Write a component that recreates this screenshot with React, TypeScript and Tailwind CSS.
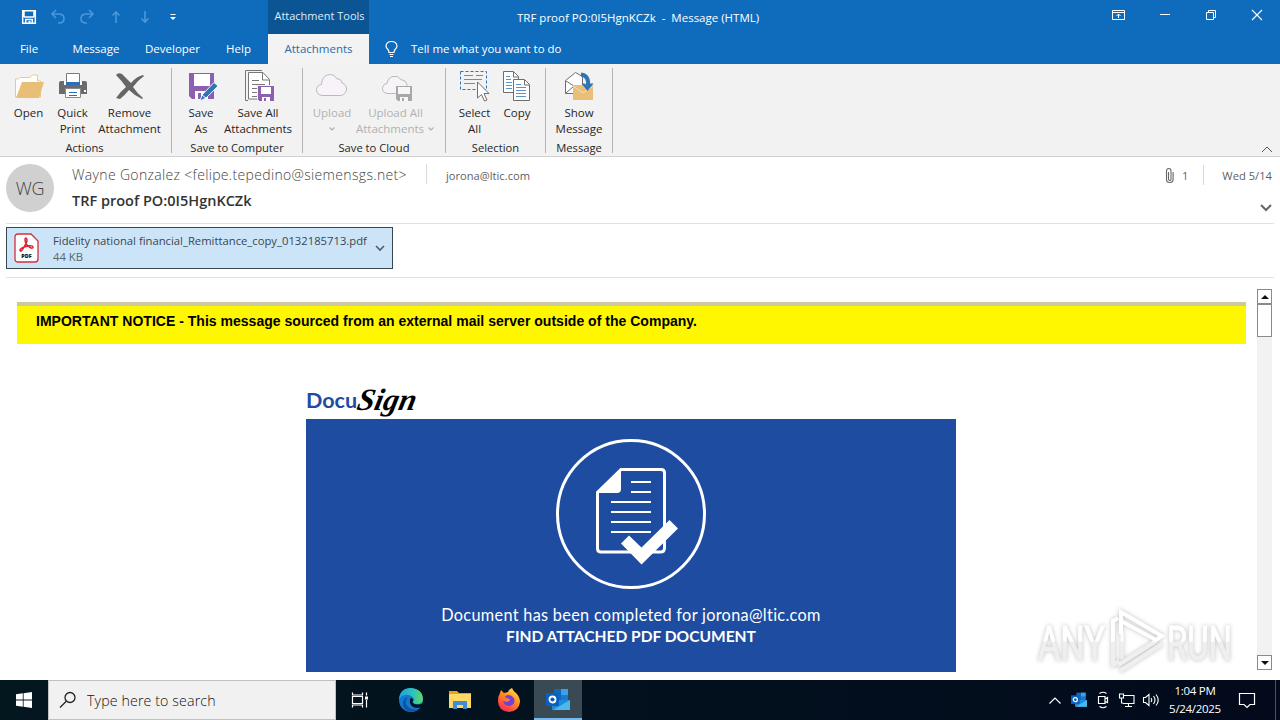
import type { ReactNode } from 'react';
import clsx from 'clsx';

interface RibbonButtonProps {
  icon: ReactNode;
  lines: ReactNode[];
  className: string;
  disabled?: boolean;
}

const RibbonButton = ({ icon, lines, className, disabled }: RibbonButtonProps) => (
  <button className={clsx('flex shrink-0 flex-col items-center whitespace-nowrap', disabled ? 'text-[#b1b1b1]' : 'text-[#262626]', className)}>
    <span className="flex h-[37px] items-center justify-center pb-[1px]">{icon}</span>
    {lines.map((line, i) => (
      <span key={i} className="flex h-4 items-center leading-4">{line}</span>
    ))}
  </button>
);

const RibbonGroup = ({ label, className, children }: { label: string; className: string; children: ReactNode }) => (
  <div className={clsx('flex h-[85px] shrink-0 flex-col border-r border-[#b5b5b5]', className)}>
    <div className="flex h-[71px] shrink-0 items-start">{children}</div>
    <div className="text-center text-[11.2px] leading-[17px] text-[#262626]">{label}</div>
  </div>
);

const Chevron = ({ className }: { className?: string }) => (
  <svg className={className} width="8" height="6" viewBox="0 0 8 6" fill="none" stroke="currentColor" strokeWidth="1.2">
    <path d="M1.500 1.500 4 4l2.500-2.500" />
  </svg>
);

/* ---- ribbon icons ---- */

const FolderIcon = () => (
  <svg className="ml-[2px]" width="32" height="32" viewBox="0 0 32 32">
    <path d="M1.500 27V9h3l2-1.500h9l3-2.500h5v6h3v16z" fill="#fff" stroke="#edc88c" />
    <path d="M2 28 8 12h22l-5 16z" fill="#e9bf78" />
  </svg>
);

const PrinterIcon = () => (
  <svg width="32" height="32" viewBox="0 0 32 32">
    <path d="M2 13q0-2 2-2h24q2 0 2 2v11H2z" fill="#6b6b6b" />
    <path d="M9.500 14V3.500h13V14" fill="#fff" stroke="#7a7a7a" />
    <path d="M7 11h2v4H7zM23 11h2v4h-2z" fill="#fff" />
    <path d="M9 12h14v3H9z" fill="#2b70b8" />
    <path d="M8.500 18.500h15v9h-15z" fill="#fff" stroke="#8a8a8a" />
    <path d="M12 22.500h8M12 25.500h8" stroke="#2b70b8" />
    <path d="M27 20h2v2h-2z" fill="#fff" />
  </svg>
);

const RemoveIcon = () => (
  <svg width="32" height="32" viewBox="0 0 32 32" fill="#666">
    <path d="M2 5q2-3 6-1 5 5 9 9 6-7 12-8l1 1q-7 5-11 11 4 6 10 11l-1 1q-7-3-13-9-4 5-9 9l-4-1q4-6 10-11Q7 10 2 5z" />
  </svg>
);

const SaveAsIcon = () => (
  <svg className="ml-[1px]" width="32" height="32" viewBox="0 0 32 32">
    <path d="M3 3h25v26H6l-3-3z" fill="#8d5fb0" />
    <path d="M8 4h16v12H8z" fill="#fff" />
    <path d="M9 21h13v8H9z" fill="#fff" />
    <path d="M12 23h3v6h-3z" fill="#8d5fb0" />
    <path d="M28 12.500 32 16 20 28l-6 3 2-6z" fill="#2e75b6" stroke="#f2f2f2" />
    <path d="m16 25 4 3" stroke="#fff" />
  </svg>
);

const SaveAllIcon = () => (
  <svg className="ml-[1px]" width="32" height="34" viewBox="0 0 32 34" fill="none" stroke="#777">
    <path d="M5 31.500H2.500v-30H19" />
    <path d="M5.500 3.500H20l6.500 7V30h-21z" fill="#fff" />
    <path d="M19.500 4v7H26M9 11.500h7M9 15.500h13M9 19.500h7M9 23.500h6M9 27.500h6" />
    <path d="M14.500 16.500h17v16h-15l-2-2z" fill="#8d5fb0" stroke="#f2f2f2" />
    <path d="M18 18h10v7H18zM19 28h8v4h-8z" fill="#fff" stroke="none" />
    <path d="M21 29h2v3h-2z" fill="#8d5fb0" stroke="none" />
  </svg>
);

const CloudIcon = () => (
  <svg className="-ml-[1px]" width="33" height="32" viewBox="0 0 33 32" fill="#f7f3f8" stroke="#bcb8bf">
    <path d="M7 25.500q-5.500-1-5.500-6 .2-4 5-5 .5-8 6-9.500 6-2 9.500 4 4-.5 5 4 4.500 1.500 4.500 6t-5 6.500z" />
  </svg>
);

const CloudSaveIcon = () => (
  <svg className="ml-[3px]" width="33" height="32" viewBox="0 0 33 32">
    <path d="M6 23.500q-4.500-1-4.500-5t4.500-5q1-6 6-7 5-1.500 8 3 5 .5 6 5v9z" fill="#f7f3f8" stroke="#bcb8bf" />
    <path d="M15 16h16v15H17l-2-2z" fill="#a8a8a8" />
    <path d="M17 17h12v7H17zM19 27h8v4h-8z" fill="#f7f7f7" />
    <path d="M21 28h2v3h-2z" fill="#a8a8a8" />
  </svg>
);

const SelectAllIcon = () => (
  <svg width="32" height="34" viewBox="0 0 32 34" fill="none" stroke="#2e75b6">
    <path d="M1.500 2.500h26v18h-26z" strokeDasharray="3 2" />
    <path d="M5 6.500h9M17 6.500h7M5 10.500h18M5 14.500h11" stroke="#5c92c4" />
    <path d="M18.500 13v16l4-3.500 3 6.500 2.500-1-3-6.500h5z" fill="#fff" stroke="#6e6e6e" />
  </svg>
);

const CopyIcon = () => (
  <svg width="30" height="34" viewBox="0 0 30 34" fill="#fff" stroke="#6e6e6e">
    <path d="M1.500 2.500h10l5 5v16h-15z" />
    <path d="M11.500 3v5H16" />
    <path d="M4 7.500h4M4 10.500h5M4 13.500h6M4 16.500h6M4 19.500h6" stroke="#5c92c4" />
    <path d="M11.500 10.500h11l5 5v16h-16z" />
    <path d="M22.500 11v5H27" />
    <path d="M14 15.500h5M14 18.500h10M14 21.500h10M14 24.500h10M14 27.500h10" stroke="#5c92c4" />
  </svg>
);

const ShowMessageIcon = () => (
  <svg width="32" height="34" viewBox="0 0 32 34">
    <path d="M2.500 24.500v-13l10-8 7 4v17z" fill="#fff" stroke="#6e6e6e" />
    <path d="m3 12 8 5-8 7" fill="none" stroke="#6e6e6e" />
    <path d="M10 16h20v15H10z" fill="#e9bf78" />
    <path d="m10 17 10 7 10-7" fill="none" stroke="#f7e2bd" />
    <path d="M18 5.500q8 1 7 11" fill="none" stroke="#2e75b6" strokeWidth="4" />
    <path d="M18.500 14.500 24.500 22l6-7.500-3 0-3 2-3-2z" fill="#2e75b6" />
  </svg>
);

/* ---- title bar ---- */

const QuickAccess = () => (
  <div className="flex w-[268px] items-center pl-[21px] text-[#4b97da]">
    <svg width="16" height="16" viewBox="0 0 16 16" fill="none" stroke="#fff" strokeWidth="1.500">
      <path d="M1.700 1.700h12.600v12.600H1.700zM3 8h10M3 2v6M13 2v6" />
      <path d="M4.700 14v-3.500h6.600V14" />
      <path d="M7.500 12h2v2.500h-2z" fill="#fff" stroke="none" />
    </svg>
    <svg className="ml-[13px]" width="16" height="16" viewBox="0 0 16 16" fill="none" stroke="currentColor" strokeWidth="1.600">
      <path d="M6 1 2 5l4 4M2 5h7.500q4.500.5 4.500 4.500T10 14H8" />
    </svg>
    <svg className="ml-[13px]" width="16" height="16" viewBox="0 0 16 16" fill="none" stroke="currentColor" strokeWidth="1.600">
      <path d="m10 1 4 4-4 4M14 5H6.500Q2 5.500 2 9.500T6 14h2" />
    </svg>
    <svg className="ml-[13px]" width="16" height="16" viewBox="0 0 16 16" fill="none" stroke="currentColor" strokeWidth="1.600">
      <path d="M8 14V3M4.500 6.500 8 3l3.500 3.500" />
    </svg>
    <svg className="ml-[13px]" width="16" height="16" viewBox="0 0 16 16" fill="none" stroke="currentColor" strokeWidth="1.600">
      <path d="M8 2v11M4.500 9.500 8 13l3.500-3.500" />
    </svg>
    <svg className="ml-[16px]" width="8" height="8" viewBox="0 0 8 8" fill="#fff">
      <path d="M1.500 1h5v1h-5zM1 4h6L4 7z" />
    </svg>
  </div>
);

const WindowButtons = () => (
  <div className="ml-auto flex shrink-0 items-center pr-[17px] pb-[4px]">
    <svg width="15" height="12" viewBox="0 0 15 12" fill="none" stroke="#fff">
      <path d="M1.500 1.500h12v9h-12zM1.500 3.500h12M7.500 9V5M5.500 7l2-2 2 2" />
    </svg>
    <svg className="ml-[33px]" width="12" height="12" viewBox="0 0 12 12" stroke="#fff"><path d="M1 5.500h10" /></svg>
    <svg className="ml-[34px]" width="12" height="12" viewBox="0 0 12 12" fill="none" stroke="#fff">
      <path d="M1.500 3.500h7v7h-7zM3.500 3V1.500h7v7H9" />
    </svg>
    <svg className="ml-[34px]" width="12" height="12" viewBox="0 0 12 12" stroke="#fff" strokeWidth="1.100"><path d="m1 1 10 10M11 1 1 11" /></svg>
  </div>
);

const TitleBar = () => (
  <header className="bg-[#0f6cbd] text-[11.500px] text-white">
    <div className="flex h-[34px]">
      <QuickAccess />
      <div className="flex w-[101px] justify-center bg-[#0c5594] pt-[8px] pl-[2px] text-[11px] leading-4 whitespace-nowrap text-[#dcecf8]">Attachment Tools</div>
      <div className="ml-[148px] pt-[10px] leading-4 whitespace-pre">TRF proof PO:0I5HgnKCZk  -  Message (HTML)</div>
      <WindowButtons />
    </div>
    <nav className="flex h-[30px] items-center whitespace-nowrap">
      <span className="w-[58px] text-center">File</span>
      <span className="w-[76px] text-center">Message</span>
      <span className="w-[77px] text-center">Developer</span>
      <span className="w-[57px] pr-[2px] text-center">Help</span>
      <span className="flex h-full w-[101px] items-center justify-center bg-[#f3f3f3] text-[#2b6cad]">Attachments</span>
      <svg className="ml-[15px]" width="15" height="18" viewBox="0 0 15 18" fill="none" stroke="#fff" strokeWidth="1.200">
        <path d="M5 12.500q0-2-1.500-3.500Q2 7.500 2 6q.5-4.500 5.500-4.500T13 6q0 1.500-1.500 3T10 12.500zM5.500 14.500h4M6 16.500h3" />
      </svg>
      <span className="ml-[12px] text-[11.450px]">Tell me what you want to do</span>
    </nav>
  </header>
);

const Ribbon = () => (
  <section className="flex h-[93px] border-b border-[#d0d0d0] bg-[#f2f2f2] pt-[4px] text-[11.500px]">
    <RibbonGroup label="Actions" className="w-[172px] pr-[2px]">
      <RibbonButton className="ml-[6px] w-[45px]" icon={<FolderIcon />} lines={['Open']} />
      <RibbonButton className="w-[43px]" icon={<PrinterIcon />} lines={['Quick', 'Print']} />
      <RibbonButton className="w-[71px]" icon={<RemoveIcon />} lines={['Remove', 'Attachment']} />
    </RibbonGroup>
    <RibbonGroup label="Save to Computer" className="w-[131px]">
      <RibbonButton className="ml-[8px] w-[42px]" icon={<SaveAsIcon />} lines={['Save', 'As']} />
      <RibbonButton className="w-[72px]" icon={<SaveAllIcon />} lines={['Save All', 'Attachments']} />
    </RibbonGroup>
    <RibbonGroup label="Save to Cloud" className="w-[143px]">
      <RibbonButton disabled className="ml-[6px] w-[46px]" icon={<CloudIcon />} lines={['Upload', <Chevron />]} />
      <RibbonButton
        disabled
        className="w-[81px]"
        icon={<CloudSaveIcon />}
        lines={['Upload All', <>Attachments<Chevron className="ml-[3px]" /></>]}
      />
    </RibbonGroup>
    <RibbonGroup label="Selection" className="w-[100px]">
      <RibbonButton className="ml-[8px] w-[41px]" icon={<SelectAllIcon />} lines={['Select', 'All']} />
      <RibbonButton className="w-[44px]" icon={<CopyIcon />} lines={['Copy']} />
    </RibbonGroup>
    <RibbonGroup label="Message" className="w-[67px]">
      <RibbonButton className="w-[66px]" icon={<ShowMessageIcon />} lines={['Show', 'Message']} />
    </RibbonGroup>
    <svg className="mt-auto mr-[6px] mb-[2px] ml-auto" width="14" height="9" viewBox="0 0 14 9" fill="none" stroke="#555">
      <path d="m2 7 5-5 5 5" />
    </svg>
  </section>
);

/* ---- message header ---- */

const MessageHeader = () => (
  <section className="mx-[6px] flex h-[67px] border-b border-[#e1e1e1] text-[#5f5f5f]">
    <div className="mt-[7px] flex h-[48px] w-[48px] items-center justify-center rounded-full bg-[#d0d0d0] text-[18px] text-[#444]">
      <span className="font-light tracking-[-0.3px]">WG</span>
    </div>
    <div className="ml-[18px] w-[354px] pt-[8px] whitespace-nowrap">
      <div className="text-[14px] leading-5 font-light tracking-[0.33px] text-[#444]">Wayne Gonzalez &lt;felipe.tepedino@siemensgs.net&gt;</div>
      <div className="mt-[6px] text-[14.500px] leading-5 font-semibold text-[#333]">TRF proof PO:0I5HgnKCZk</div>
    </div>
    <div className="mt-[7px] h-[20px] border-l border-[#dadada] pl-[19px] text-[11.150px] leading-[24px]">jorona@ltic.com</div>
    <div className="ml-auto flex flex-col items-end">
      <div className="mt-[7px] flex h-[22px] items-center pr-[2px] text-[11.200px]">
        <svg width="10" height="17" viewBox="0 0 10 17" fill="none" stroke="#666" strokeWidth="1.100">
          <path d="M3.500 5v7q0 1.500 1.300 1.500T6 12V4Q6 1.500 3.800 1.500T1.500 4v8.500q0 3 3.300 3t3.300-3V5" />
        </svg>
        <span className="ml-[7px] pt-[2px]">1</span>
        <span className="ml-[15px] h-[20px] border-l border-[#dadada]" />
        <span className="ml-[18px] pt-[2px] whitespace-nowrap">Wed 5/14</span>
      </div>
      <svg className="mt-[17px] mr-[1px]" width="14" height="10" viewBox="0 0 14 10" fill="none" stroke="#666" strokeWidth="2">
        <path d="m2 2 5 5 5-5" />
      </svg>
    </div>
  </section>
);

const AttachmentBar = () => (
  <section className="mx-[6px] h-[54px] border-b border-[#e1e1e1] pt-[3px]">
    <div className="flex h-[42px] w-[387px] items-center border border-[#3a4650] bg-[#cce4f7] text-[#3a4650]">
      <svg className="ml-[7px] shrink-0" width="25" height="30" viewBox="0 0 25 30" fill="none">
        <path d="M4 1h13l7 7v18q0 3-3 3H4q-3 0-3-3V4q0-3 3-3z" fill="#fff" stroke="#d32f3a" strokeWidth="1.300" />
        <path d="M6 17q0-2 6-3.500 7-1.500 7 .5 0 2-3 .5-5-3-5-8 .3-2.500 1.500-1 1.500 2-1.500 7Q8 17.500 7 18q-1 .3-1-1z" stroke="#e02030" strokeWidth="1.500" />
        <text x="12.500" y="25" textAnchor="middle" fontSize="5.500" fontWeight="800" fill="#111">PDF</text>
      </svg>
      <div className="ml-[14px] w-[315px] pt-[2px] text-[11.270px] leading-4 whitespace-nowrap">
        <div>Fidelity national financial_Remittance_copy_0132185713.pdf</div>
        <div className="text-[#56646f]">44 KB</div>
      </div>
      <svg className="ml-[6px] shrink-0" width="12" height="9" viewBox="0 0 12 9" fill="none" stroke="#4d5f6d" strokeWidth="1.600">
        <path d="m2 2 4 4 4-4" />
      </svg>
    </div>
  </section>
);

/* ---- message body ---- */

const DocuSignCard = () => (
  <div className="mt-[36px] ml-[289px] w-[650px]">
    <div className="flex h-[39px] items-end whitespace-nowrap">
      <span className="w-[52px] font-['Lato',sans-serif] text-[21.500px] leading-[38px] font-bold text-[#1f4ba0]">Docu</span>
      <span className="-skew-x-12 font-['Liberation_Serif',serif] text-[31px] leading-[38px] font-bold text-black italic">Sign</span>
    </div>
    <div className="flex h-[253px] flex-col items-center bg-[#1e4ca1] pt-[20px] font-['Lato',sans-serif] text-white">
      <svg width="150" height="150" viewBox="0 0 150 150" fill="none" stroke="#fff">
        <circle cx="75" cy="75" r="73.500" strokeWidth="3" />
        <path d="M65 30.500h40q3.500 0 3.500 3.500v75q0 4-4 4H45q-3.500 0-3.500-3.500V53.500z" strokeWidth="3" />
        <path d="M41 54v-1l23-23h1v20q0 4-4 4z" fill="#fff" stroke="none" />
        <path d="M75 43h20M75 53h20M55 63h40M55 73h40M55 83h40M55 93h40" strokeWidth="2" />
        <path d="m65 104.500 8-8 12.500 12L113.500 81l8.500 8.500-36.500 36z" fill="#fff" stroke="none" />
      </svg>
      <div className="mt-[15px] text-[16.300px] leading-[22px] tracking-[0.3px]">Document has been completed for jorona@ltic.com</div>
      <div className="-mt-[1px] text-[15.550px] leading-[22px] font-bold">FIND ATTACHED PDF DOCUMENT</div>
    </div>
  </div>
);

const Scrollbar = () => (
  <div className="flex h-[381px] w-[15px] flex-col bg-[#f2f2f2]">
    <div className="flex h-[15px] items-center justify-center border border-[#8a8a8a] bg-white">
      <svg width="8" height="4" viewBox="0 0 8 4"><path d="m0 4 4-4 4 4z" fill="#111" /></svg>
    </div>
    <div className="h-[33px] border border-[#8a8a8a] bg-white" />
    <div className="mt-auto flex h-[15px] items-center justify-center border border-[#8a8a8a] bg-white">
      <svg width="8" height="4" viewBox="0 0 8 4"><path d="m0 0 4 4 4-4z" fill="#111" /></svg>
    </div>
  </div>
);

const Watermark = () => (
  <svg
    className="absolute top-[604px] left-[1030px] font-['Roboto',sans-serif] drop-shadow-[0_0_2px_rgba(0,0,0,0.25)]"
    width="214"
    height="76"
    viewBox="0 0 214 76"
  >
    <defs>
      <linearGradient id="mark" gradientUnits="userSpaceOnUse" x1="0" y1="0" x2="0" y2="76">
        <stop offset="0.49" stopColor="#fff" />
        <stop offset="0.5" stopColor="#efefef" />
      </linearGradient>
      <linearGradient id="mark-text" gradientUnits="userSpaceOnUse" x1="0" y1="-56" x2="0" y2="20">
        <stop offset="0.49" stopColor="#fff" />
        <stop offset="0.5" stopColor="#efefef" />
      </linearGradient>
    </defs>
    <g fill="url(#mark-text)" stroke="url(#mark-text)" fontSize="49">
      <text transform="translate(8 56) scale(0.7 1)">ANY</text>
      <text transform="translate(137 56) scale(0.67 1)">RUN</text>
    </g>
    <path
      d="M88 14l-5 3v44l6-4M91 30V8l41 24-6 4-35-19M90 67l42-27M88 61l38-24"
      fill="none"
      stroke="url(#mark)"
      strokeWidth="4"
    />
    <path d="M92 27v28" fill="none" stroke="url(#mark)" strokeWidth="3" />
  </svg>
);

const MessageBody = () => (
  <main className="flex h-[402px] bg-white pt-[11px] pl-[17px]">
    <div className="w-[1229px] pt-[13px]">
      <div className="h-[42px] border-t-[4px] border-[#ccc8a0] bg-[#fff700] pt-[7px] pl-[19px] font-['Liberation_Sans',Arial,sans-serif] text-[14px] leading-4 font-bold tracking-[0.02px] whitespace-nowrap text-black">
        IMPORTANT NOTICE - This message sourced from an external mail server outside of the Company.
      </div>
      <DocuSignCard />
    </div>
    <div className="ml-[11px]">
      <Scrollbar />
    </div>
  </main>
);

/* ---- taskbar ---- */

const OutlookIcon = ({ className }: { className: string }) => (
  <svg className={className} viewBox="0 0 24 24">
    <path d="M8 1h14v12H8z" fill="#1067b8" />
    <path d="M15 1h7v6h-7z" fill="#35a1ef" />
    <path d="M15 7h7v6h-7z" fill="#1b78d0" />
    <path d="M6 12h18v10H6z" fill="#1f8ad8" />
    <path d="m24 12-17 10h17z" fill="#4cb8ec" />
    <path d="M0 5h13v13H0z" fill="#0a5fc0" />
    <circle cx="6.500" cy="11.500" r="3" fill="none" stroke="#fff" strokeWidth="1.800" />
  </svg>
);

const EdgeIcon = () => (
  <svg width="24" height="24" viewBox="0 0 24 24">
    <defs>
      <linearGradient id="edge-top" x1="0" y1="0.500" x2="1" y2="0.500">
        <stop offset="0" stopColor="#1ea0e0" />
        <stop offset="0.600" stopColor="#2fc3b8" />
        <stop offset="1" stopColor="#62d860" />
      </linearGradient>
    </defs>
    <circle cx="12" cy="12" r="12" fill="#1379cf" />
    <path d="M0 11Q1 0 12 0q11 1 12 10 0 6-6 6-4 0-4-2 2-2 0-4.500Q11 6 6 7q-4 1-6 4z" fill="url(#edge-top)" />
    <path d="M9 9q-4 4-1 9 4 5 12 3-5 4-11 2-6-3-5-9 1-4 5-5z" fill="#1252a0" />
    <path d="M12 10q2 0 2.300 2-1.500 2-.3 3 2 2 6 1.500 3-.5 4.500-2v3q-2 2.500-5.500 2.500-6 0-7.500-4-1.500-4 .5-6z" fill="#03131d" />
  </svg>
);

const ExplorerIcon = () => (
  <svg width="22" height="20" viewBox="0 0 22 20">
    <path d="M0 1h8l2 2h12v6H0z" fill="#e8a317" />
    <path d="M0 4h22v14H0z" fill="#ffd866" />
    <path d="M4 19v-7q0-1 1-1h12q1 0 1 1v7h-4v-4H8v4z" fill="#3f8fd0" />
  </svg>
);

const FirefoxIcon = () => (
  <svg width="24" height="24" viewBox="0 0 24 24">
    <defs>
      <linearGradient id="fox" x1="0.800" y1="0" x2="0.200" y2="1">
        <stop offset="0" stopColor="#ffe24a" />
        <stop offset="0.450" stopColor="#ff8a1e" />
        <stop offset="1" stopColor="#f5205e" />
      </linearGradient>
    </defs>
    <path d="M3 5l1-3 3 3 4-1q1-3 4-4 1 3 4 5 4 4 4 9-1 9-11 10Q1 23 1 13q0-5 2-8z" fill="url(#fox)" />
    <path d="M8 8q5-3 9 2 2 6-4 8-6 0-7-5l4 1q3-1 3-3l-4-1z" fill="#7340d8" />
  </svg>
);

const Tray = () => (
  <div className="ml-auto flex items-center text-white">
    <svg width="14" height="9" viewBox="0 0 14 9" fill="none" stroke="#fff" strokeWidth="1.200"><path d="m1.500 7.500 5.500-5.500 5.500 5.500" /></svg>
    <OutlookIcon className="ml-[9px] h-[16px] w-[16px]" />
    <svg className="ml-[9px]" width="14" height="18" viewBox="0 0 14 18" fill="none" stroke="#fff" strokeWidth="1.200">
      <path d="M2.500 5.500h6.500v7H2.500zM9 8l2.500-1.500v5L9 10.500M3.500 2.500q3.500-2.500 7 0M3.500 15.500q3.500 2.500 7 0" />
    </svg>
    <svg className="ml-[8px]" width="17" height="16" viewBox="0 0 17 16" fill="none" stroke="#fff" strokeWidth="1.100">
      <path d="M5 3.500h11v8H5M1.500 2h4v4h-4zM3.500 6v5H5M10.500 12v2.500M7 14.500h7" />
    </svg>
    <svg className="ml-[7px]" width="18" height="16" viewBox="0 0 18 16" fill="none" stroke="#fff" strokeWidth="1.100">
      <path d="M1.500 5.500h2l3.500-3v11l-3.500-3h-2zM9 6q1.500 2 0 4M11.500 4q3 4 0 8M14 2.500q4.500 5.500 0 11" />
    </svg>
    <div className="ml-[5px] w-[60px] text-center text-[11.500px] leading-[18px] tracking-[-0.3px] whitespace-nowrap">
      <div>1:04 PM</div>
      <div>5/24/2025</div>
    </div>
    <svg className="ml-[13px]" width="18" height="17" viewBox="0 0 18 17" fill="none" stroke="#fff" strokeWidth="1.200">
      <path d="M1.500 1.500h15v11H12l-3 3-3-3H1.500z" />
    </svg>
    <span className="ml-[19px] h-[40px] w-[5px] border-l border-[#4b555b]" />
  </div>
);

const Taskbar = () => (
  <footer className="flex h-[40px] bg-gradient-to-r from-[#03171f] to-[#020a1c]">
    <div className="flex w-[48px] items-center justify-center">
      <svg width="16" height="16" viewBox="0 0 16 16" fill="#fff">
        <path d="M0 2.300 6.800 1.300v6.300H0zM7.600 1.200 16 0v7.600H7.600zM0 8.400h6.800v6.400L0 13.800zM7.600 8.400H16V16l-8.400-1.200z" />
      </svg>
    </div>
    <div className="flex w-[288px] items-center border border-[#c2c2c2] bg-[#f1f1f1] pl-[10px] text-[#111]">
      <svg width="18" height="18" viewBox="0 0 18 18" fill="none" stroke="#222" strokeWidth="1.300">
        <circle cx="11" cy="6.500" r="5" />
        <path d="m7.500 10-6.500 6.500" />
      </svg>
      <span className="ml-[10px] pt-[2px] text-[14.200px] leading-5 font-light tracking-[0.12px] whitespace-nowrap">Type here to search</span>
    </div>
    <div className="flex w-[48px] items-center justify-center">
      <svg width="18" height="16" viewBox="0 0 18 16" fill="none" stroke="#fff" strokeWidth="1.200">
        <path d="M1.500.5V3h10V.5M1.500 4.500h10v7h-10zM1.500 15.500V13h10v2.500M15.500.5v3M15.500 8v7.500" />
        <path d="M14 4.500h3v3h-3z" fill="#fff" stroke="none" />
      </svg>
    </div>
    <div className="flex w-[54px] items-center justify-center"><EdgeIcon /></div>
    <div className="flex w-[44px] items-center justify-center"><ExplorerIcon /></div>
    <div className="flex w-[52px] items-center justify-center pl-[2px]"><FirefoxIcon /></div>
    <div className="flex w-[48px] items-center justify-center border-b-2 border-[#76b9ed] bg-[#3a4a54] pt-[2px]">
      <OutlookIcon className="h-[24px] w-[24px]" />
    </div>
    <Tray />
  </footer>
);

const App = () => (
  <div className="relative h-[720px] w-[1280px] overflow-hidden bg-white font-['Open_Sans','Noto_Sans',sans-serif]">
    <TitleBar />
    <Ribbon />
    <MessageHeader />
    <AttachmentBar />
    <MessageBody />
    <Taskbar />
    <Watermark />
  </div>
);

export default App;
